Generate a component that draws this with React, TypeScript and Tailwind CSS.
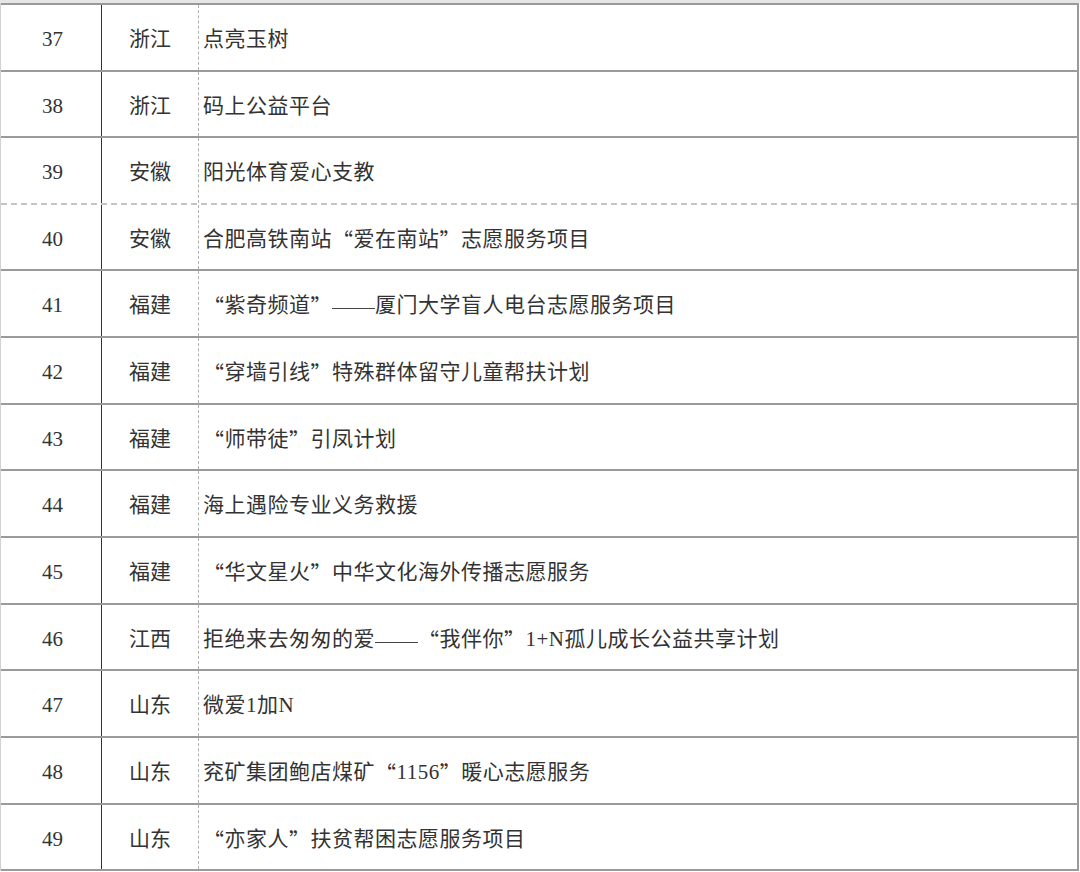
import React from "react";

const rows: [string, string, string, number, boolean][] = [
  ["37", "浙江", "点亮玉树", 67, false],
  ["38", "浙江", "码上公益平台", 66, false],
  ["39", "安徽", "阳光体育爱心支教", 67, true],
  ["40", "安徽", "合肥高铁南站“爱在南站”志愿服务项目", 66, false],
  ["41", "福建", "“紫奇频道”——厦门大学盲人电台志愿服务项目", 67, false],
  ["42", "福建", "“穿墙引线”特殊群体留守儿童帮扶计划", 67, false],
  ["43", "福建", "“师带徒”引凤计划", 66, false],
  ["44", "福建", "海上遇险专业义务救援", 67, false],
  ["45", "福建", "“华文星火”中华文化海外传播志愿服务", 67, false],
  ["46", "江西", "拒绝来去匆匆的爱——“我伴你”1+N孤儿成长公益共享计划", 66, false],
  ["47", "山东", "微爱1加N", 67, false],
  ["48", "山东", "兖矿集团鲍店煤矿“1156”暖心志愿服务", 67, false],
  ["49", "山东", "“亦家人”扶贫帮困志愿服务项目", 66, false],
];

function Txt({ t }: { t: string }) {
  const parts = t.split(/([“”—])/);
  return (
    <>
      {parts.map((p, i) =>
        p === "“" || p === "”" || p === "—" ? (
          <span
            key={i}
            className="inline-block w-[21.5px] text-center"
            style={{ fontFamily: '"Noto Sans CJK SC", sans-serif' }}
          >
            {p === "—" ? (
              <span className="inline-block w-[21.5px] h-[1px] bg-[#444] align-middle" />
            ) : (
              p
            )}
          </span>
        ) : (
          <span key={i}>{p}</span>
        )
      )}
    </>
  );
}

export default function App() {
  return (
    <div
      className="w-[1080px] h-[872px] bg-white overflow-hidden text-[#333] text-[21px]"
      style={{ fontFamily: '"Liberation Serif", "Noto Sans CJK SC", serif' }}
    >
      <div className="h-[3px] bg-[#e6e6e6]" />
      <div className="w-[1079px] border-l border-r-2 border-l-[#d0d0d0] border-r-[#9a9a9a]">
        <div className="h-[2px] bg-[#9a9a9a]" />
        {rows.map(([n, p, t, h, dashed]) => (
          <div
            key={n}
            className={
              dashed
                ? "flex border-b-2 border-dashed border-b-[#c4c4c4]"
                : "flex border-b-2 border-b-[#9a9a9a]"
            }
            style={{ height: h }}
          >
            <div className="w-[101px] flex items-center justify-center pl-[3px] pt-[5px] border-r border-r-[#333]">
              {n}
            </div>
            <div className="w-[96px] flex items-center justify-center pt-[5px]">{p}</div>
            <div className="flex-1 flex items-center pl-[4px] pt-[5px] tracking-[0.5px] border-l border-dashed border-l-[#b0b0b0] whitespace-nowrap">
              <Txt t={t} />
            </div>
          </div>
        ))}
      </div>
    </div>
  );
}
